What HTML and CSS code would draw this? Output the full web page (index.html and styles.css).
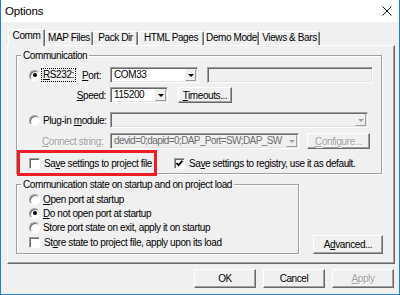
FILE: index.html
```html
<!DOCTYPE html>
<html lang="en">
<head>
  <meta charset="UTF-8">
  <title>Options</title>
  <link rel="stylesheet" href="styles.css">
</head>
<body>
  <div class="window">
    <div class="titlebar">
      <span class="title">Options</span>
      <svg class="close" width="10" height="10" viewBox="0 0 10 10"><path d="M0.5 0.5L9.5 9.5M9.5 0.5L0.5 9.5" stroke="#111" stroke-width="1"/></svg>
    </div>

    <div class="client">
      <div class="tabs">
        <div class="tab active tab-comm">Comm</div>
        <div class="tab tab-map">MAP Files</div>
        <div class="tab tab-pack">Pack Dir</div>
        <div class="tab tab-html">HTML Pages</div>
        <div class="tab tab-demo">Demo Mode</div>
        <div class="tab tab-views">Views &amp; Bars</div>
      </div>

      <div class="panel">
        <!-- Communication -->
        <fieldset class="group group-comm">
          <legend>Communication</legend>

          <div class="row row-port">
            <div class="opt opt-rs">
              <span class="radio on"></span>
              <span class="focus"><u>R</u>S232:</span>
            </div>
            <span class="lbl lbl-port"><u>P</u>ort:</span>
            <div class="field combo combo-port">
              <span class="val">COM33</span>
              <span class="arrow"></span>
            </div>
            <div class="field off field-port"></div>
          </div>

          <div class="row row-speed">
            <span class="lbl lbl-speed"><u>S</u>peed:</span>
            <div class="field combo combo-speed">
              <span class="val">115200</span>
              <span class="arrow"></span>
            </div>
            <button class="btn btn-timeouts"><u>T</u>imeouts...</button>
          </div>

          <div class="row row-plugin">
            <div class="opt opt-plugin">
              <span class="radio"></span>
              <span class="opt-text">Plug-in <u>m</u>odule:</span>
            </div>
            <div class="field off combo combo-plugin">
              <span class="val"></span>
              <span class="arrow dim"></span>
            </div>
          </div>

          <div class="row row-connect">
            <span class="lbl lbl-connect dis"><u>C</u>onnect string:</span>
            <div class="field off combo combo-connect">
              <span class="val gray">devid=0;dapid=0;DAP_Port=SW;DAP_SW</span>
              <span class="arrow dim"></span>
            </div>
            <button class="btn btn-configure dis"><u>C</u>onfigure...</button>
          </div>

          <div class="row row-save">
            <div class="mark">
              <span class="check"></span>
              <span class="opt-text">Sa<u>v</u>e settings to project file</span>
            </div>
            <div class="opt opt-registry">
              <span class="check">
                <svg width="7" height="7" viewBox="0 0 7 7"><path d="M0.5 3L2.5 5.2L6.5 0.8" stroke="#000" stroke-width="1.8" fill="none"/></svg>
              </span>
              <span class="opt-text">Sa<u>v</u>e settings to registry, use it as default.</span>
            </div>
          </div>
        </fieldset>

        <div class="lower">
          <!-- Startup state -->
          <fieldset class="group group-state">
            <legend>Communication state on startup and on project load</legend>
            <div class="line first">
              <span class="radio"></span>
              <span class="opt-text"><u>O</u>pen port at startup</span>
            </div>
            <div class="line">
              <span class="radio on"></span>
              <span class="opt-text"><u>D</u>o not open port at startup</span>
            </div>
            <div class="line">
              <span class="radio"></span>
              <span class="opt-text">Store port state on exit, apply it on startup</span>
            </div>
            <div class="line last">
              <span class="check"></span>
              <span class="opt-text">St<u>o</u>re state to project file, apply upon its load</span>
            </div>
          </fieldset>
          <button class="btn btn-advanced">A<u>d</u>vanced...</button>
        </div>
      </div>

      <div class="actions">
        <button class="btn btn-action">OK</button>
        <button class="btn btn-action">Cancel</button>
        <button class="btn btn-action dis"><u>A</u>pply</button>
      </div>
    </div>
  </div>
</body>
</html>
```

FILE: styles.css
```css
* {
  box-sizing: border-box;
}

body {
  margin: 0;
  background: #fff;
  font-family: "Liberation Sans", Arial, sans-serif;
  font-size: 10px;
  letter-spacing: -0.4px;
  color: #000;
}

u {
  text-decoration-thickness: 1px;
  text-underline-offset: 1px;
}

.window {
  width: 400px;
  height: 295px;
  border: 1px solid #1883d7;
  border-top: none;
  background: #f0f0f0;
  display: flex;
  flex-direction: column;
}

.titlebar {
  height: 22px;
  flex: none;
  background: #fff;
  display: flex;
  align-items: center;
  justify-content: space-between;
  padding: 0 7px 0 4px;
}

.title {
  font-size: 11.5px;
  letter-spacing: -0.2px;
}

.client {
  flex: 1;
  padding: 7px 4px 0 6px;
  display: flex;
  flex-direction: column;
}

/* tabs */
.tabs {
  display: flex;
  align-items: flex-end;
  height: 16px;
  padding-left: 1px;
}

.tab {
  height: 14px;
  border: 1px solid;
  border-bottom: none;
  border-color: #fff #696969 transparent #fff;
  border-radius: 2px 2px 0 0;
  box-shadow: inset -1px 0 #a0a0a0;
  text-align: center;
  line-height: 11px;
  white-space: nowrap;
}

.tab.active {
  height: 17px;
  margin-bottom: -1px;
  position: relative;
  z-index: 1;
  background: #f0f0f0;
}

.tab-comm { width: 37px; }
.tab-map { width: 48px; }
.tab-pack { width: 45px; }
.tab-html { width: 66px; }
.tab-demo { width: 55px; }
.tab-views { width: 61px; }

.panel {
  height: 219px;
  border: 1px solid;
  border-color: #fff #696969 #696969 #fff;
  box-shadow: inset -1px -1px #a0a0a0;
  padding: 3px 0 0 8px;
}

/* group boxes */
.group {
  margin: 0;
  min-width: 0;
  border: 1px solid #a0a0a0;
  box-shadow: inset 1px 1px #fff, 1px 1px #fff;
}

.group legend {
  margin-left: -6px;
  padding: 0 2px;
  line-height: 13px;
  background: #f0f0f0;
}

.group-comm {
  width: 366px;
  padding: 0 0 0 10px;
}

.row {
  display: flex;
  align-items: center;
  height: 16px;
}

.row-port { margin-top: 5px; }
.row-speed { margin-top: 4px; }
.row-plugin { margin-top: 9px; }
.row-connect { margin-top: 5px; }

.row-save {
  margin-top: 1px;
  height: 26px;
  margin-bottom: -3px;
}

.opt {
  display: flex;
  align-items: center;
}

.opt-rs { width: 55px; }
.opt-plugin { width: 83px; }

.radio {
  width: 11px;
  height: 11px;
  flex: none;
  margin: 0 3px 0 2px;
  border-radius: 50%;
  border: 1px solid;
  border-color: #a0a0a0 #fff #fff #a0a0a0;
  box-shadow: inset 1px 1px #696969;
  background: #fff;
  display: flex;
  align-items: center;
  justify-content: center;
}

.radio.on::after {
  content: "";
  width: 4px;
  height: 4px;
  border-radius: 50%;
  background: #000;
}

.check {
  width: 11px;
  height: 11px;
  flex: none;
  margin: 0 4px 0 2px;
  border: 1px solid;
  border-color: #a0a0a0 #fff #fff #a0a0a0;
  box-shadow: inset 1px 1px #696969;
  background: #fff;
  display: flex;
  align-items: center;
  justify-content: center;
}

.focus {
  border: 1px dotted #000;
  line-height: 12px;
  padding: 0 1px;
  margin-left: -2px;
}

.opt-text {
  white-space: nowrap;
}

.lbl {
  white-space: nowrap;
}

.lbl-port { width: 28px; }

.lbl-speed {
  width: 83px;
  text-align: right;
  padding-right: 4px;
}

.lbl-connect {
  width: 83px;
  padding-left: 15px;
}

.dis {
  color: #a0a0a0;
  text-shadow: 1px 1px #fff;
}

/* sunken fields */
.field {
  height: 16px;
  border: 1px solid;
  border-color: #a0a0a0 #fff #fff #a0a0a0;
  box-shadow: inset 1px 1px #696969, inset -1px -1px #e3e3e3;
  background: #fff;
}

.field.off {
  background: #f0f0f0;
}

.combo {
  display: flex;
  padding: 1px 1px 1px 2px;
}

.combo .val {
  flex: 1;
  overflow: hidden;
  white-space: nowrap;
  line-height: 12px;
  padding-left: 1px;
}

.val.gray {
  color: #6d6d6d;
  letter-spacing: -0.6px;
}

.arrow {
  width: 11px;
  flex: none;
  background: #f0f0f0;
  border: 1px solid;
  border-color: #f0f0f0 #a0a0a0 #a0a0a0 #f0f0f0;
  display: flex;
  align-items: center;
  justify-content: center;
}

.arrow::after {
  content: "";
  border-left: 3px solid transparent;
  border-right: 3px solid transparent;
  border-top: 3px solid #000;
}

.arrow.dim::after {
  border-top-color: #a0a0a0;
}

.combo-port { width: 88px; }
.field-port { width: 166px; margin-left: 9px; }
.combo-speed { width: 58px; }
.combo-plugin { width: 258px; }
.combo-connect { width: 189px; }

/* buttons */
.btn {
  height: 16px;
  padding: 0;
  font: inherit;
  letter-spacing: inherit;
  color: #000;
  background: #f0f0f0;
  border: 1px solid;
  border-color: #fff #696969 #696969 #fff;
  box-shadow: inset -1px -1px #a0a0a0;
  text-align: center;
  white-space: nowrap;
}

.btn.dis {
  color: #a0a0a0;
}

.btn-timeouts { width: 54px; margin-left: 10px; }
.btn-configure { width: 63px; margin-left: 8px; }

/* red mark round the project file option */
.mark {
  width: 140px;
  height: 26px;
  margin-left: -10px;
  border: 3px solid #ee1c24;
  padding-left: 7px;
  display: flex;
  align-items: center;
}

.opt-registry {
  margin-left: 15px;
}

.lower {
  display: flex;
  align-items: flex-end;
  margin-top: 4px;
}

.group-state {
  width: 283px;
  padding: 0 0 4px 10px;
}

.line {
  display: flex;
  align-items: center;
  height: 14px;
}

.line.first { margin-top: 1px; }
.line.last { margin-top: 1px; }

.btn-advanced {
  width: 70px;
  height: 19px;
  margin-left: 14px;
}

.actions {
  display: flex;
  justify-content: flex-end;
  gap: 7px;
  margin: 5px 1px 0 0;
}

.btn-action {
  width: 62px;
  height: 19px;
}
```
